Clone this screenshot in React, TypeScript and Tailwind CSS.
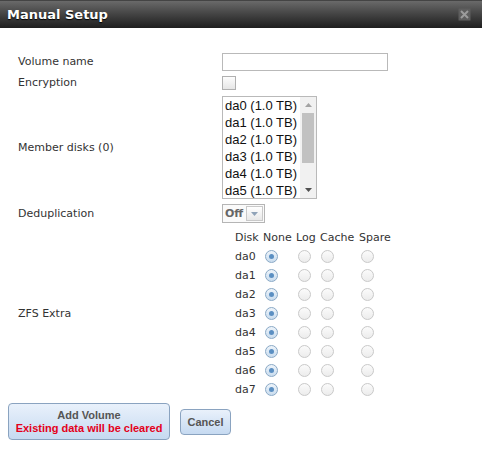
import React from 'react'

const disks = ['da0', 'da1', 'da2', 'da3', 'da4', 'da5', 'da6', 'da7']
const listDisks = ['da0', 'da1', 'da2', 'da3', 'da4', 'da5']

function Radio({ checked }: { checked?: boolean }) {
  if (checked) {
    return (
      <div className="flex h-[13px] w-[13px] items-center justify-center rounded-full border border-[#8aa9c6] bg-gradient-to-b from-[#eef4fa] to-[#c9dcee]">
        <div className="h-[5px] w-[5px] rounded-full bg-[#5b8fc2]" />
      </div>
    )
  }
  return (
    <div className="h-[13px] w-[13px] rounded-full border border-[#c9c9c9] bg-gradient-to-b from-[#fbfbfb] to-[#ececec]" />
  )
}

export default function App() {
  return (
    <div className="h-[453px] w-[482px] bg-white font-['DejaVu_Sans',Verdana,sans-serif] text-[11px] leading-[14px] text-[#333]">
      <div className="flex h-[28px] items-center justify-between border-t border-[#444] bg-gradient-to-b from-[#6a6a6a] to-[#1f1f1f] pl-[7px] pr-[11px]">
        <span className="text-[13px] font-bold text-white [text-shadow:0_1px_1px_#000]">Manual Setup</span>
        <svg width="13" height="13" viewBox="0 0 13 13">
          <rect x="0.5" y="0.5" width="12" height="12" fill="#5e5e5e" />
          <path d="M3 3 L10 10 M10 3 L3 10" stroke="#9c9c9c" strokeWidth="2" />
        </svg>
      </div>

      <div className="grid grid-cols-[204px_1fr] items-center gap-y-[5px] pl-[18px] pt-[25px]">
        <div>Volume name</div>
        <div className="h-[18px] w-[166px] border border-[#b9b9b9] bg-white" />

        <div>Encryption</div>
        <div className="h-[14px] w-[14px] border border-[#b0b0b0] bg-gradient-to-b from-[#fdfdfd] to-[#e6e6e6]" />

        <div className="mt-[1px]">Member disks (0)</div>
        <div className="mt-[1px] flex h-[103px] w-[95px] border border-[#b9b9b9] bg-white font-['Liberation_Sans',Arial,sans-serif] text-[13px] leading-[17px] text-[#111]">
          <div className="flex-1 pl-[2px]">
            {listDisks.map((d) => (
              <div key={d} className="whitespace-nowrap">{d} (1.0 TB)</div>
            ))}
          </div>
          <div className="flex w-[16px] flex-col bg-[#f1f1f1]">
            <div className="flex h-[16px] items-center justify-center">
              <svg width="7" height="4" viewBox="0 0 7 4"><path d="M0 4 L3.5 0 L7 4 Z" fill="#a3a3a3" /></svg>
            </div>
            <div className="mx-[2px] h-[50px] bg-[#c1c1c1]" />
            <div className="flex-1" />
            <div className="flex h-[16px] items-center justify-center">
              <svg width="7" height="4" viewBox="0 0 7 4"><path d="M0 0 L3.5 4 L7 0 Z" fill="#505050" /></svg>
            </div>
          </div>
        </div>

        <div>Deduplication</div>
        <div className="flex h-[19px] w-[43px] border border-[#b5b5b5] bg-[#fafafa]">
          <div className="flex w-[22px] items-center pl-[2px] font-bold text-[#666]">Off</div>
          <div className="m-[1px] flex flex-1 items-center justify-center border border-[#c9c9c9] bg-gradient-to-b from-white to-[#e8e8e8]">
            <svg width="7" height="4" viewBox="0 0 7 4"><path d="M0 0 L3.5 4 L7 0 Z" fill="#90a3b8" /></svg>
          </div>
        </div>

        <div className="mt-[1px]">ZFS Extra</div>
        <div className="mt-[1px] pl-[13px]">
          <table className="border-separate border-spacing-0">
            <thead>
              <tr className="h-[18px]">
                <th className="w-[28px] p-0 text-left font-normal">Disk</th>
                <th className="w-[33px] p-0 text-left font-normal">None</th>
                <th className="w-[24px] p-0 text-left font-normal">Log</th>
                <th className="w-[39px] p-0 text-left font-normal">Cache</th>
                <th className="p-0 text-left font-normal">Spare</th>
              </tr>
            </thead>
            <tbody>
              {disks.map((d) => (
                <tr key={d} className="h-[19px]">
                  <td className="p-0">{d}</td>
                  <td className="p-0 pl-[2px]"><Radio checked /></td>
                  <td className="p-0 pl-[2px]"><Radio /></td>
                  <td className="p-0 pl-[1px]"><Radio /></td>
                  <td className="p-0 pl-[2px]"><Radio /></td>
                </tr>
              ))}
            </tbody>
          </table>
        </div>
      </div>

      <div className="mt-[4px] flex items-center gap-[10px] pl-[8px] font-['Liberation_Sans',Arial,sans-serif]">
        <div className="flex h-[37px] w-[162px] flex-col items-center justify-center rounded-[4px] border border-[#8aa3c0] bg-gradient-to-b from-[#e9f1fb] to-[#c6daf1] text-[11px] font-bold leading-[13px]">
          <span className="text-[#555]">Add Volume</span>
          <span className="whitespace-nowrap text-[#e4001b]">Existing data will be cleared</span>
        </div>
        <div className="flex h-[26px] w-[51px] items-center justify-center rounded-[4px] border border-[#8aa3c0] bg-gradient-to-b from-[#e9f1fb] to-[#c6daf1] text-[11px] font-bold text-[#555]">
          Cancel
        </div>
      </div>
    </div>
  )
}
